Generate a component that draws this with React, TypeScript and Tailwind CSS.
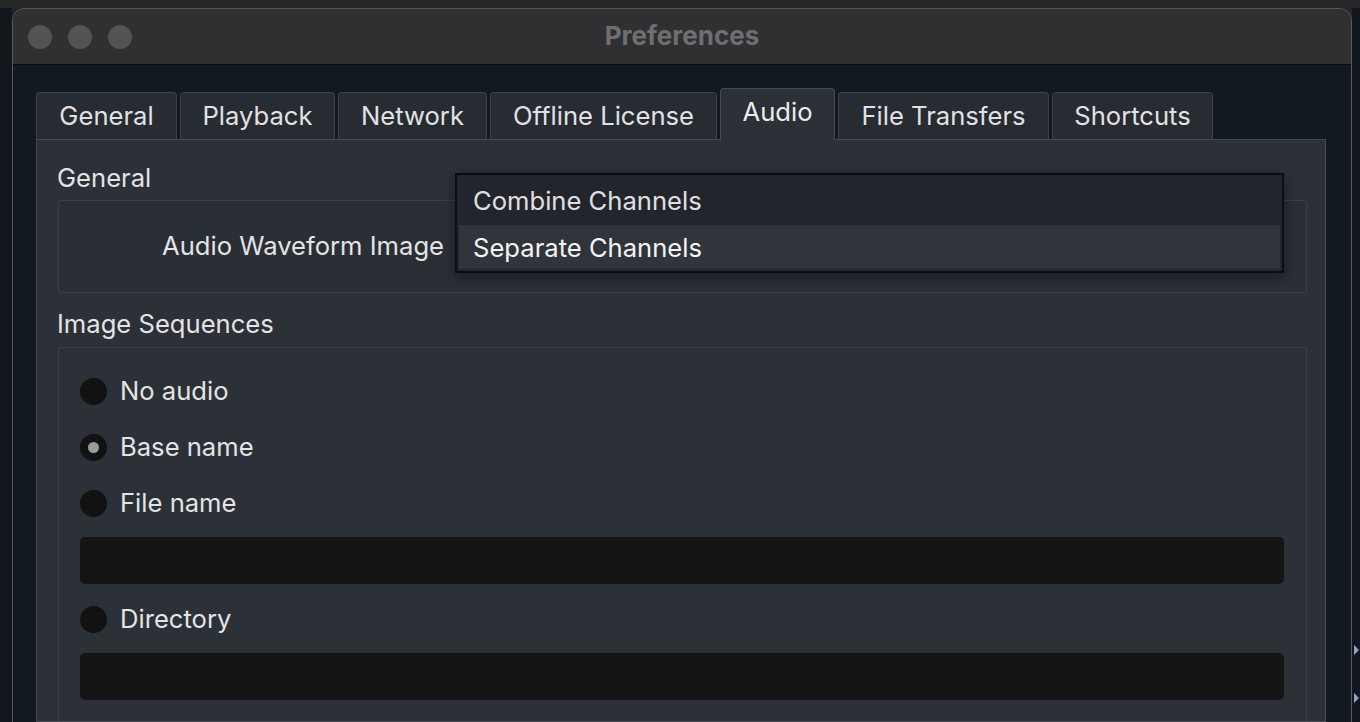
import React from "react";

const tabs = [
  { label: "General", w: "w-[141px]" },
  { label: "Playback", w: "w-[155px]" },
  { label: "Network", w: "w-[149px]" },
  { label: "Offline License", w: "w-[227px]" },
  { label: "Audio", w: "w-[115px]", active: true },
  { label: "File Transfers", w: "w-[211px]" },
  { label: "Shortcuts", w: "w-[161px]" },
];

function Radio({ label, checked }: { label: string; checked?: boolean }) {
  return (
    <div className="flex h-[28px] items-center gap-[13px]">
      <div className="flex h-[27px] w-[27px] items-center justify-center rounded-full bg-[#121212]">
        {checked && <div className="h-[11px] w-[11px] rounded-full bg-[#9b9b9b]" />}
      </div>
      <span>{label}</span>
    </div>
  );
}

export default function App() {
  return (
    <div
      className="flex h-[722px] w-[1360px] flex-col overflow-hidden bg-[#262626] text-[25.6px] text-[#e4e4e4]"
      style={{ fontFamily: "Inter, 'Liberation Sans', sans-serif" }}
    >
      <div className="h-[8px] shrink-0" />
      <div className="flex flex-1 min-h-0">
        <div className="w-[12px] shrink-0 bg-[#12171d]" />

        {/* window */}
        <div className="flex flex-1 flex-col overflow-hidden rounded-t-[13px] border-x border-t border-[#59595b] bg-[#131920]">
          <div className="relative flex h-[56px] shrink-0 items-center border-b border-[#0b0b0b] bg-[#303032]">
            <div className="flex gap-[16px] pl-[15px]">
              <div className="h-[24px] w-[24px] rounded-full bg-[#535356]" />
              <div className="h-[24px] w-[24px] rounded-full bg-[#535356]" />
              <div className="h-[24px] w-[24px] rounded-full bg-[#535356]" />
            </div>
            <div className="absolute inset-0 flex items-center justify-center pb-[2px] text-[26px] font-bold text-[#6f6f71]">
              Preferences
            </div>
          </div>

          <div className="flex flex-1 flex-col pl-[23px] pr-[25px] pt-[23px]">
            {/* tabs */}
            <div className="relative z-10 flex h-[52px] items-end gap-[3px]">
              {tabs.map((t) =>
                t.active ? (
                  <div
                    key={t.label}
                    className={`${t.w} flex h-[52px] items-center justify-center rounded-t-[4px] border-x border-t border-[#464a51] bg-[#2c3037] pb-[4px] text-[#ececec]`}
                  >
                    {t.label}
                  </div>
                ) : (
                  <div
                    key={t.label}
                    className={`${t.w} mb-[1px] flex h-[47px] items-center justify-center rounded-t-[4px] border-x border-t border-[#3d4148] bg-[#272b32] text-[#e2e2e2]`}
                  >
                    {t.label}
                  </div>
                )
              )}
            </div>

            {/* panel */}
            <div className="-mt-[1px] flex flex-1 flex-col border border-[#464a51] bg-[#2c3037] pl-[20px] pr-[18px] pt-[24px]">
              <div className="h-[28px] leading-[28px]">General</div>
              <div className="relative ml-[1px] mt-[8px] flex h-[93px] items-center rounded-[3px] border border-[#3b3f46] bg-[#2a2e35]">
                <div className="w-[385px] text-right">Audio Waveform Image</div>

                {/* open dropdown */}
                <div className="absolute left-[396px] top-[-28px] w-[829px] border-2 border-[#0c0d0f] bg-[#22252c] shadow-[0_4px_12px_rgba(0,0,0,0.4)]">
                  <div className="flex h-[50px] items-center bg-[#22252c] pl-[16px] pt-[3px] text-[#e0e0e0]">
                    Combine Channels
                  </div>
                  <div className="mx-[2px] mb-[2px] flex h-[44px] items-center bg-[#30343b] pl-[14px] pt-[3px] text-[#f4f4f4]">
                    Separate Channels
                  </div>
                </div>
              </div>

              <div className="mt-[17px] h-[28px] leading-[28px]">Image Sequences</div>
              <div className="ml-[1px] mt-[9px] flex flex-1 flex-col rounded-t-[3px] border-x border-t border-[#3b3f46] pl-[21px] pr-[22px] pt-[29px]">
                <Radio label="No audio" />
                <div className="mt-[28px]">
                  <Radio label="Base name" checked />
                </div>
                <div className="mt-[28px]">
                  <Radio label="File name" />
                </div>
                <div className="mt-[20px] h-[47px] rounded-[5px] bg-[#141414]" />
                <div className="mt-[21px]">
                  <Radio label="Directory" />
                </div>
                <div className="mt-[20px] h-[47px] rounded-[5px] bg-[#141414]" />
              </div>
            </div>
          </div>
        </div>

        <div className="relative w-[8px] shrink-0 bg-[#12171d]">
          <div className="absolute left-[2px] top-[637px] h-0 w-0 border-y-[5px] border-l-[5px] border-y-transparent border-l-[#8fa4c8]" />
          <div className="absolute left-[2px] top-[685px] h-0 w-0 border-y-[5px] border-l-[5px] border-y-transparent border-l-[#8fa4c8]" />
        </div>
      </div>
    </div>
  );
}
